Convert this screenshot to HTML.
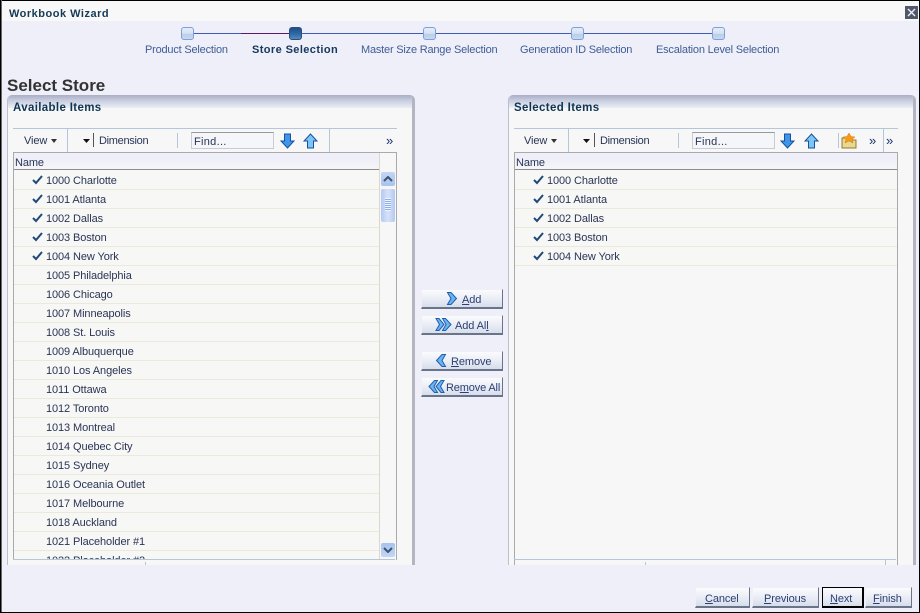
<!DOCTYPE html>
<html><head><meta charset="utf-8"><style>
html,body{margin:0;padding:0;background:#eeeff8}
#p{position:relative;width:920px;height:613px;overflow:hidden;background:#eeeff8;font-family:"Liberation Sans",sans-serif;font-size:11px;color:#2a3556;letter-spacing:-.1px}
#p div,#p svg{position:absolute}
.t{white-space:nowrap;line-height:14px}
.rows .t{margin-top:1px}
.dim{letter-spacing:-.3px}
.h{font-weight:bold;color:#0f3552;font-size:11.5px;letter-spacing:.35px}
.lab{color:#3f5d96;font-size:11px;white-space:nowrap;line-height:14px;top:43px;letter-spacing:-.2px}
.node{width:11px;height:11px;border:1px solid #7d9fe0;border-radius:3px;top:27px;background:linear-gradient(#e4ecf8 0,#d6e2f2 50%,#b9cee9 55%,#c8d8ee 100%)}
.panel{top:95px;height:470px;background:#f7f7f7;border-left:1px solid #bcc0cc;border-right:3px solid #b3b6c0;border-radius:5px 5px 0 0;overflow:hidden}
.phead{left:0;right:0;top:0;height:13px;background:linear-gradient(#a9aec4,#c9cee0 45%,#eceef6)}
.line{background:#b4c6da}
.row{left:0;height:18px;border-bottom:1px solid #e9e9dc;background:#f7f7f5}
.btn{height:17px;background:linear-gradient(#fafbfd 0,#f0f2f8 35%,#d7deec 100%);border:1px solid #eef0f6;border-right-color:#6b7389;border-bottom-color:#6b7389;border-bottom-width:2px;color:#2b3f73;white-space:nowrap}
.btn div{line-height:14px;top:3px;white-space:nowrap}
.fb{height:18px}
.fb div{top:4px}
u{text-decoration:underline}
</style></head><body><div id="p">
<div style="left:0;top:1px;width:920px;height:20px;background:#f8f8f8"></div>
<div class="t" style="left:9px;top:7px;font-weight:bold;color:#153a56;font-size:11px;letter-spacing:.5px">Workbook Wizard</div>
<div style="left:905px;top:6px;width:13px;height:13px;background:#50586a"></div>
<svg style="left:905px;top:6px" width="13" height="13"><path d="M3 3l7 7M10 3l-7 7" stroke="#eef" stroke-width="1.4"/></svg>

<div style="left:187px;top:33px;width:54px;height:1px;background:#3f5cb8"></div>
<div style="left:241px;top:33px;width:54px;height:1px;background:#5a1a70"></div>
<div style="left:295px;top:33px;width:423px;height:1px;background:#3f5cb8"></div>
<div class="node" style="left:181px"></div>
<div class="node" style="left:289px;border-color:#2a4f7c;background:linear-gradient(#1e4f85,#2f6aa5 55%,#5589bb)"></div>
<div class="node" style="left:423px"></div>
<div class="node" style="left:571px"></div>
<div class="node" style="left:712px"></div>
<div class="lab" style="left:145px">Product Selection</div>
<div class="lab" style="left:252px;font-weight:bold;color:#17375e;letter-spacing:.4px">Store Selection</div>
<div class="lab" style="left:361px">Master Size Range Selection</div>
<div class="lab" style="left:520px">Generation ID Selection</div>
<div class="lab" style="left:656px">Escalation Level Selection</div>

<div class="t" style="left:7px;top:76px;font-size:17px;font-weight:bold;color:#333;line-height:19px;letter-spacing:0">Select Store</div>

<!-- left panel -->
<div class="panel" style="left:7px;width:404px">
<div class="phead"></div>
<div class="t h" style="left:5px;top:6px">Available Items</div>
<div class="line" style="left:5px;top:33px;width:384px;height:1px"></div>
<div class="line" style="left:59px;top:34px;width:1px;height:23px"></div>
<div class="line" style="left:169px;top:38px;width:1px;height:15px"></div>
<div class="line" style="left:321px;top:34px;width:1px;height:23px"></div>
<div class="t" style="left:16px;top:39px">View</div>
<svg style="left:42px;top:44px" width="8" height="5"><path d="M1 0h6l-3 4z" fill="#333"/></svg>
<svg style="left:74px;top:44px" width="9" height="5"><path d="M1 0h7l-3.500 4z" fill="#111"/></svg>
<div style="left:85px;top:38px;width:1px;height:14px;background:#555"></div>
<div class="t dim" style="left:91px;top:39px">Dimension</div>
<div style="left:183px;top:37px;width:81px;height:15px;background:#f4f6fa;border:1px solid #c8ccd4;border-top-color:#999"></div>
<div class="t" style="left:186px;top:40px;letter-spacing:.3px">Find...</div>
<svg style="left:272px;top:38px" width="15" height="16"><path d="M4.500 1h6v7h3.500l-6.500 7-6.500-7h3.500z" fill="#3f95ea" stroke="#17509c"/></svg>
<svg style="left:295px;top:38px" width="15" height="16"><path d="M4.500 15h6v-7h3.500l-6.500-7-6.500 7h3.500z" fill="#7cc6f6" stroke="#17509c"/></svg>
<div class="t" style="left:378px;top:39px;color:#13306c;font-size:13px">»</div>
<div style="left:5px;top:57px;width:382px;height:420px;border:1px solid #aaa;border-bottom:0;background:#f7f7f5"></div>
<div style="left:6px;top:58px;width:365px;height:16px;background:linear-gradient(#eeeff8 0,#eeeff8 40%,#f6f6f8);border-bottom:1px solid #8a8a95"></div>
<div style="left:371px;top:58px;width:1px;height:410px;background:#d8d8cc"></div>
<div style="left:372px;top:58px;width:16px;height:410px;background:#f7f7f7"></div>
<div class="t" style="left:7px;top:61px">Name</div>
<div class="rows" style="left:6px;top:76px;width:365px;height:388px;overflow:hidden">
<div class="row" style="top:0;width:365px"></div><div class="row" style="top:19px;width:365px"></div><div class="row" style="top:38px;width:365px"></div><div class="row" style="top:57px;width:365px"></div><div class="row" style="top:76px;width:365px"></div><div class="row" style="top:95px;width:365px"></div><div class="row" style="top:114px;width:365px"></div><div class="row" style="top:133px;width:365px"></div><div class="row" style="top:152px;width:365px"></div><div class="row" style="top:171px;width:365px"></div><div class="row" style="top:190px;width:365px"></div><div class="row" style="top:209px;width:365px"></div><div class="row" style="top:228px;width:365px"></div><div class="row" style="top:247px;width:365px"></div><div class="row" style="top:266px;width:365px"></div><div class="row" style="top:285px;width:365px"></div><div class="row" style="top:304px;width:365px"></div><div class="row" style="top:323px;width:365px"></div><div class="row" style="top:342px;width:365px"></div><div class="row" style="top:361px;width:365px"></div><div class="row" style="top:380px;width:365px"></div>
<svg style="left:18px;top:4px" width="12" height="10"><path d="M1 5l3 3 6-7" fill="none" stroke="#1f4a78" stroke-width="2"/></svg>
<svg style="left:18px;top:23px" width="12" height="10"><path d="M1 5l3 3 6-7" fill="none" stroke="#1f4a78" stroke-width="2"/></svg>
<svg style="left:18px;top:42px" width="12" height="10"><path d="M1 5l3 3 6-7" fill="none" stroke="#1f4a78" stroke-width="2"/></svg>
<svg style="left:18px;top:61px" width="12" height="10"><path d="M1 5l3 3 6-7" fill="none" stroke="#1f4a78" stroke-width="2"/></svg>
<svg style="left:18px;top:80px" width="12" height="10"><path d="M1 5l3 3 6-7" fill="none" stroke="#1f4a78" stroke-width="2"/></svg>
<div class="t" style="left:32px;top:2px">1000 Charlotte</div>
<div class="t" style="left:32px;top:21px">1001 Atlanta</div>
<div class="t" style="left:32px;top:40px">1002 Dallas</div>
<div class="t" style="left:32px;top:59px">1003 Boston</div>
<div class="t" style="left:32px;top:78px">1004 New York</div>
<div class="t" style="left:32px;top:97px">1005 Philadelphia</div>
<div class="t" style="left:32px;top:116px">1006 Chicago</div>
<div class="t" style="left:32px;top:135px">1007 Minneapolis</div>
<div class="t" style="left:32px;top:154px">1008 St. Louis</div>
<div class="t" style="left:32px;top:173px">1009 Albuquerque</div>
<div class="t" style="left:32px;top:192px">1010 Los Angeles</div>
<div class="t" style="left:32px;top:211px">1011 Ottawa</div>
<div class="t" style="left:32px;top:230px">1012 Toronto</div>
<div class="t" style="left:32px;top:249px">1013 Montreal</div>
<div class="t" style="left:32px;top:268px">1014 Quebec City</div>
<div class="t" style="left:32px;top:287px">1015 Sydney</div>
<div class="t" style="left:32px;top:306px">1016 Oceania Outlet</div>
<div class="t" style="left:32px;top:325px">1017 Melbourne</div>
<div class="t" style="left:32px;top:344px">1018 Auckland</div>
<div class="t" style="left:32px;top:363px">1021 Placeholder #1</div>
<div class="t" style="left:32px;top:382px">1022 Placeholder #2</div>
</div>
<div style="left:373px;top:77px;width:14px;height:14px;background:linear-gradient(#c3d6f4,#a8c3ee);border-radius:2px"></div>
<svg style="left:375px;top:81px" width="10" height="6"><path d="M1 5l4-4 4 4" fill="none" stroke="#3d5372" stroke-width="2"/></svg>
<div style="left:373px;top:94px;width:14px;height:33px;background:linear-gradient(90deg,#b4c9f2,#d7e2f8 50%,#b4c9f2);border-radius:2px"></div>
<div style="left:377px;top:103px;width:6px;height:13px;background:repeating-linear-gradient(#eef3fd 0,#eef3fd 1px,#8fb0ee 1px,#8fb0ee 2px)"></div>
<div style="left:373px;top:448px;width:14px;height:14px;background:linear-gradient(#a8c3ee,#c3d6f4);border-radius:2px"></div>
<svg style="left:375px;top:452px" width="10" height="6"><path d="M1 1l4 4 4-4" fill="none" stroke="#3d5372" stroke-width="2"/></svg>
<div style="left:5px;top:464px;width:382px;height:1px;background:#b4c6da"></div>
<div style="left:5px;top:465px;width:384px;height:5px;background:#f7f7f7"></div>
<div style="left:137px;top:467px;width:1px;height:3px;background:#b4c6da"></div>
</div>

<!-- right panel -->
<div class="panel" style="left:508px;width:404px">
<div class="phead"></div>
<div class="t h" style="left:5px;top:6px">Selected Items</div>
<div class="line" style="left:5px;top:33px;width:384px;height:1px"></div>
<div class="line" style="left:59px;top:34px;width:1px;height:23px"></div>
<div class="line" style="left:169px;top:38px;width:1px;height:15px"></div>
<div class="line" style="left:329px;top:38px;width:1px;height:15px"></div>
<div class="line" style="left:374px;top:34px;width:1px;height:23px"></div>
<div class="t" style="left:15px;top:39px">View</div>
<svg style="left:41px;top:44px" width="8" height="5"><path d="M1 0h6l-3 4z" fill="#333"/></svg>
<svg style="left:73px;top:44px" width="9" height="5"><path d="M1 0h7l-3.500 4z" fill="#111"/></svg>
<div style="left:85px;top:38px;width:1px;height:14px;background:#555"></div>
<div class="t dim" style="left:91px;top:39px">Dimension</div>
<div style="left:183px;top:37px;width:81px;height:15px;background:#f4f6fa;border:1px solid #c8ccd4;border-top-color:#999"></div>
<div class="t" style="left:186px;top:40px;letter-spacing:.3px">Find...</div>
<svg style="left:271px;top:38px" width="15" height="16"><path d="M4.500 1h6v7h3.500l-6.500 7-6.500-7h3.500z" fill="#3f95ea" stroke="#17509c"/></svg>
<svg style="left:295px;top:38px" width="15" height="16"><path d="M4.500 15h6v-7h3.500l-6.500-7-6.500 7h3.500z" fill="#7cc6f6" stroke="#17509c"/></svg>
<svg style="left:332px;top:38px" width="16" height="16"><path d="M1 5h5l1 2h8v8H1z" fill="#e6d992" stroke="#94792c"/><path d="M8 0l2 3.500 4 .5-3 2.500 1 3.500-4-2-4 2 1-3.500-3-2.500 4-.5z" fill="#f59a17" stroke="#d97a10" stroke-width=".5"/></svg>
<div class="t" style="left:360px;top:39px;color:#13306c;font-size:13px">»</div>
<div class="t" style="left:377px;top:39px;color:#13306c;font-size:13px">»</div>
<div style="left:5px;top:57px;width:382px;height:420px;border:1px solid #aaa;border-bottom:0;background:#f7f7f7"></div>
<div style="left:6px;top:58px;width:382px;height:16px;background:linear-gradient(#eeeff8 0,#eeeff8 40%,#f6f6f8);border-bottom:1px solid #8a8a95"></div>
<div class="t" style="left:7px;top:61px">Name</div>
<div class="rows" style="left:6px;top:76px;width:382px;height:95px;overflow:hidden">
<div class="row" style="top:0;width:382px"></div><div class="row" style="top:19px;width:382px"></div><div class="row" style="top:38px;width:382px"></div><div class="row" style="top:57px;width:382px"></div><div class="row" style="top:76px;width:382px"></div>
<svg style="left:18px;top:4px" width="12" height="10"><path d="M1 5l3 3 6-7" fill="none" stroke="#1f4a78" stroke-width="2"/></svg>
<svg style="left:18px;top:23px" width="12" height="10"><path d="M1 5l3 3 6-7" fill="none" stroke="#1f4a78" stroke-width="2"/></svg>
<svg style="left:18px;top:42px" width="12" height="10"><path d="M1 5l3 3 6-7" fill="none" stroke="#1f4a78" stroke-width="2"/></svg>
<svg style="left:18px;top:61px" width="12" height="10"><path d="M1 5l3 3 6-7" fill="none" stroke="#1f4a78" stroke-width="2"/></svg>
<svg style="left:18px;top:80px" width="12" height="10"><path d="M1 5l3 3 6-7" fill="none" stroke="#1f4a78" stroke-width="2"/></svg>
<div class="t" style="left:32px;top:2px">1000 Charlotte</div>
<div class="t" style="left:32px;top:21px">1001 Atlanta</div>
<div class="t" style="left:32px;top:40px">1002 Dallas</div>
<div class="t" style="left:32px;top:59px">1003 Boston</div>
<div class="t" style="left:32px;top:78px">1004 New York</div>
</div>
<div style="left:5px;top:464px;width:382px;height:1px;background:#b4c6da"></div>
<div style="left:136px;top:467px;width:1px;height:3px;background:#b4c6da"></div>
<div style="left:376px;top:465px;width:1px;height:5px;background:#b4c6da"></div>
</div>

<!-- move buttons -->
<div style="left:421px;top:289px;width:80px" class="btn"><div style="left:40px"><u>A</u>dd</div></div>
<div style="left:421px;top:315px;width:80px" class="btn"><div style="left:33px">Add Al<u>l</u></div></div>
<div style="left:421px;top:351px;width:80px" class="btn"><div style="left:29px"><u>R</u>emove</div></div>
<div style="left:421px;top:377px;width:80px" class="btn"><div style="left:24px;letter-spacing:-.15px">Re<u>m</u>ove All</div></div>
<svg style="left:446px;top:291px" width="12" height="15"><path d="M1.500 1.500h3.500l5.500 6-5.500 6h-3.500l3.500-6z" fill="#6fb2f0" stroke="#1c5fb0"/></svg>
<svg style="left:435px;top:317px" width="18" height="15"><path d="M1 1.500h3l5 6-5 6h-3l3.500-6z" fill="#6fb2f0" stroke="#1c5fb0"/><path d="M7.500 1.500h3l5.500 6-5.500 6h-3l3.500-6z" fill="#6fb2f0" stroke="#1c5fb0"/></svg>
<svg style="left:435px;top:353px" width="12" height="15"><path d="M10.500 1.500h-3.500l-5.500 6 5.500 6h3.500l-3.500-6z" fill="#6fb2f0" stroke="#1c5fb0"/></svg>
<svg style="left:427px;top:379px" width="18" height="15"><path d="M17 1.500h-3l-5 6 5 6h3l-3.500-6z" fill="#6fb2f0" stroke="#1c5fb0"/><path d="M10.500 1.500h-3l-5.500 6 5.500 6h3l-3.500-6z" fill="#6fb2f0" stroke="#1c5fb0"/></svg>

<!-- footer -->
<div style="left:695px;top:587px;width:53px" class="btn fb"><div style="left:9px"><u>C</u>ancel</div></div>
<div style="left:752px;top:587px;width:65px" class="btn fb"><div style="left:11px"><u>P</u>revious</div></div>
<div style="left:822px;top:587px;width:39px;border:1px solid #000;border-bottom-width:2px;border-right-width:2px" class="btn fb"><div style="left:7px"><u>N</u>ext</div></div>
<div style="left:865px;top:587px;width:45px" class="btn fb"><div style="left:7px"><u>F</u>inish</div></div>

<!-- window border -->
<div style="left:0;top:0;width:920px;height:1px;background:#000"></div>
<div style="left:0;top:0;width:1px;height:613px;background:#000"></div>
<div style="left:1px;top:0;width:1px;height:613px;background:#6b6b6b"></div>
<div style="left:0;top:612px;width:920px;height:1px;background:#000"></div>
<div style="left:919px;top:0;width:1px;height:613px;background:#000"></div>
</div></body></html>
